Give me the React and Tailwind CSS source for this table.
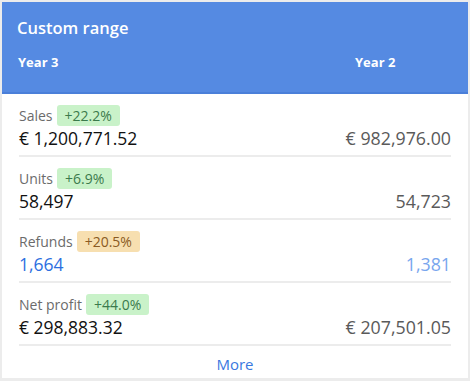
export default function App() {
  const rows = [
    { label: "Sales", badge: "+22.2%", tone: "green", a: "€ 1,200,771.52", b: "€ 982,976.00" },
    { label: "Units", badge: "+6.9%", tone: "green", a: "58,497", b: "54,723" },
    { label: "Refunds", badge: "+20.5%", tone: "orange", a: "1,664", b: "1,381", blue: true },
    { label: "Net profit", badge: "+44.0%", tone: "green", a: "€ 298,883.32", b: "€ 207,501.05" },
  ];
  return (
    <div className="w-[470px] h-[381px] bg-[#ececec] p-[2px]" style={{ fontFamily: '"Open Sans", sans-serif' }}>
      <div className="w-[466px] h-[376px] bg-white flex flex-col">
        <div className="h-[92px] shrink-0 bg-[#558ae2] border-b-2 border-[#4a7fd9] pl-[15px] pr-[17px] pt-[14px]">
          <div className="text-white text-[16.5px] font-semibold leading-[24px]">Custom range</div>
          <div className="flex mt-[13px] text-white text-[13px] font-bold leading-[18px] pl-[1px]">
            <div className="flex-1">Year 3</div>
            <div className="w-[96px]">Year 2</div>
          </div>
        </div>
        <div className="px-[17px]">
          {rows.map((r) => (
            <div key={r.label} className="h-[63px] border-b-2 border-[#ececec] pt-[11px] flex items-end justify-between pb-[5px]">
              <div className="flex flex-col">
                <div className="flex items-center gap-[4px] h-[21px]">
                  <span className="text-[14px] leading-[20px] text-[#6b6b6b]">{r.label}</span>
                  <span
                    className={
                      r.tone === "green"
                        ? "rounded-[3px] bg-[#c9f2c9] text-[#3b7a4c] text-[14px] leading-[21px] px-[8px]"
                        : "rounded-[3px] bg-[#f7dfb0] text-[#8a5a22] text-[14px] leading-[21px] px-[8px]"
                    }
                  >
                    {r.badge}
                  </span>
                </div>
                <div className={(r.blue ? "text-[#2d6fdf]" : "text-[#111111]") + " text-[17.5px] leading-[24px]"}>{r.a}</div>
              </div>
              <div className={(r.blue ? "text-[#79a6ee]" : "text-[#5a5a5a]") + " text-[17.8px] leading-[24px]"}>{r.b}</div>
            </div>
          ))}
          <div className="text-center text-[#3a78e0] text-[15px] leading-[20px] pt-[8px]">More</div>
        </div>
      </div>
    </div>
  );
}
